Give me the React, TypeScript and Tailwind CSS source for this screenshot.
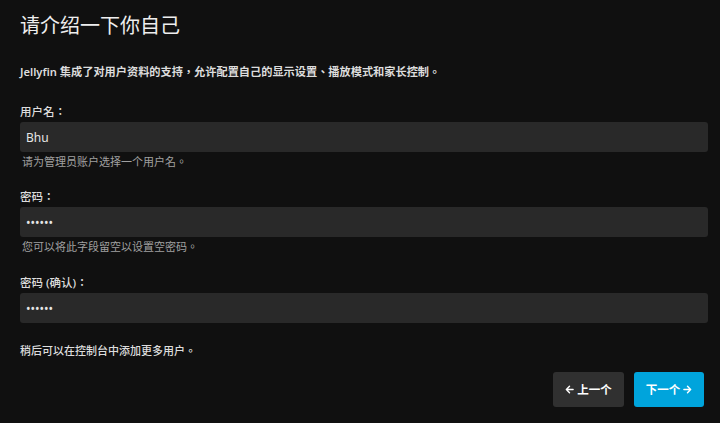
import React from "react";

const font = { fontFamily: '"Noto Sans", "Noto Sans CJK TC", sans-serif' };

function Field({ label, value, help, type }: { label: string; value: string; help?: string; type?: string }) {
  return (
    <div className="flex flex-col">
      <label className="text-[11.5px] leading-[16px] font-medium text-[#dddddd]">{label}</label>
      <input
        readOnly
        type={type || "text"}
        value={value}
        className="mt-[2px] h-[30px] w-full rounded-[3px] bg-[#292929] px-[6px] text-[12px] text-[#e6e6e6] outline-none"
        style={font}
      />
      {help && <div className="mt-[2px] pl-[2px] text-[11px] leading-[16px] text-[#a0a0a0]">{help}</div>}
    </div>
  );
}

function ArrowLeft() {
  return (
    <svg width="9" height="9" viewBox="0 0 10 10" fill="none" stroke="white" strokeWidth="1.6" strokeLinecap="round" strokeLinejoin="round">
      <path d="M9 5H1.5M5 1.5L1.5 5L5 8.5" />
    </svg>
  );
}

function ArrowRight() {
  return (
    <svg width="9" height="9" viewBox="0 0 10 10" fill="none" stroke="white" strokeWidth="1.6" strokeLinecap="round" strokeLinejoin="round">
      <path d="M1 5H8.5M5 1.5L8.5 5L5 8.5" />
    </svg>
  );
}

export default function App() {
  return (
    <div className="min-h-[423px] w-[720px] bg-[#101010] pl-[20px] pr-[12px] pt-[12px]" style={font}>
      <h1 className="text-[20px] leading-[28px] font-normal text-[#eeeeee]">请介绍一下你自己</h1>
      <p className="mt-[24px] text-[11.2px] leading-[16px] font-semibold text-[#dddddd]">
        Jellyfin 集成了对用户资料的支持，允许配置自己的显示设置、播放模式和家长控制。
      </p>
      <div className="mt-[24px]">
        <Field label="用户名：" value="Bhu" help="请为管理员账户选择一个用户名。" />
      </div>
      <div className="mt-[19px]">
        <Field label="密码：" value="123456" type="password" help="您可以将此字段留空以设置空密码。" />
      </div>
      <div className="mt-[20px]">
        <Field label="密码 (确认)：" value="123456" type="password" />
      </div>
      <p className="mt-[20px] text-[11px] leading-[16px] font-medium text-[#dddddd]">稍后可以在控制台中添加更多用户。</p>
      <div className="mt-[13px] flex justify-end gap-[10px] pr-[4px]">
        <button className="flex h-[35px] w-[71px] items-center justify-center gap-[3px] rounded-[3px] bg-[#303030] text-[11.5px] font-semibold text-white">
          <ArrowLeft />
          <span>上一个</span>
        </button>
        <button className="flex h-[35px] w-[70px] items-center justify-center gap-[3px] rounded-[3px] bg-[#00a4dc] text-[11.5px] font-semibold text-white">
          <span>下一个</span>
          <ArrowRight />
        </button>
      </div>
    </div>
  );
}
